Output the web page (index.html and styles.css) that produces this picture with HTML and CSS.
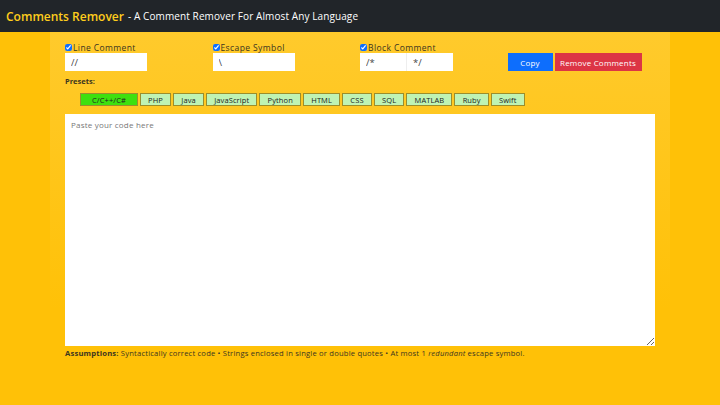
FILE: index.html
```html
<!DOCTYPE html>
<html>
  <head>
    <title>Comments Remover</title>
    <link rel="stylesheet" href="styles.css">
  </head>
  <body>
    <header class="topbar">
      <span class="brand">Comments Remover</span>
      <span class="tagline">- A Comment Remover For Almost Any Language</span>
    </header>
    <main class="container">
      <div class="options">
        <div class="option">
          <label class="option-label"><input type="checkbox" checked />Line Comment</label>
          <div class="fields">
            <input type="text" class="field field-wide" value="//" />
          </div>
        </div>
        <div class="option">
          <label class="option-label"><input type="checkbox" checked />Escape Symbol</label>
          <div class="fields">
            <input type="text" class="field field-wide" value="\" />
          </div>
        </div>
        <div class="option">
          <label class="option-label"><input type="checkbox" checked />Block Comment</label>
          <div class="fields">
            <input type="text" class="field field-half" value="/*" />
            <input type="text" class="field field-half" value="*/" />
          </div>
        </div>
        <div class="actions">
          <button class="btn btn-copy">Copy</button>
          <button class="btn btn-remove">Remove Comments</button>
        </div>
      </div>
      <div class="presets-label">Presets:</div>
      <div class="presets">
        <button class="preset active">C/C++/C#</button>
        <button class="preset">PHP</button>
        <button class="preset">Java</button>
        <button class="preset">JavaScript</button>
        <button class="preset">Python</button>
        <button class="preset">HTML</button>
        <button class="preset">CSS</button>
        <button class="preset">SQL</button>
        <button class="preset">MATLAB</button>
        <button class="preset">Ruby</button>
        <button class="preset">Swift</button>
      </div>
      <textarea class="code" placeholder="Paste your code here"></textarea>
      <p class="assumptions">
        <b>Assumptions:</b> Syntactically correct code &bull; Strings enclosed in single or double quotes &bull; At most 1 <i>redundant</i> escape symbol.
      </p>
    </main>
  </body>
</html>
```

FILE: styles.css
```css
body {
  font-family: "Open Sans", sans-serif;
  background-color: #ffc107;
  margin: 0;
  padding: 0;
  color: #3b3520;
}
.topbar {
  height: 32px;
  background-color: #212529;
  display: flex;
  align-items: center;
  padding-left: 6px;
  white-space: nowrap;
}
.brand {
  color: #ffcd1c;
  font-size: 12px;
  font-weight: 600;
}
.tagline {
  color: #fff;
  font-size: 10px;
  margin-left: 4px;
  letter-spacing: 0.1px;
}
.container {
  width: 590px;
  margin: 0 50px;
  padding: 9px 15px 20px;
  background: linear-gradient(to bottom, #ffca2c, #ffc107 80%);
}
.options {
  display: grid;
  grid-template-columns: repeat(4, 1fr);
}
.option-label {
  display: flex;
  align-items: center;
  font-size: 8.5px;
  letter-spacing: 0.4px;
  height: 10px;
  margin-top: 1px;
}
.option-label input {
  width: 7px;
  height: 7px;
  margin: 0 1px 0 0;
  accent-color: #0d6efd;
}
.fields {
  display: flex;
  margin-top: 1px;
}
.field {
  height: 18px;
  box-sizing: border-box;
  border: none;
  padding: 0 6px;
  font-family: "Open Sans", sans-serif;
  font-size: 9.5px;
  color: #444;
  background-color: #fff;
}
.field-wide {
  width: 82px;
}
.field-half {
  width: 46px;
}
.field-half + .field-half {
  width: 47px;
  border-left: 1px solid #eee;
}
.actions {
  display: flex;
  gap: 2px;
  align-items: flex-end;
  padding-top: 12px;
}
.btn {
  height: 18px;
  border: none;
  color: #fff;
  font-family: "Open Sans", sans-serif;
  font-size: 8px;
  letter-spacing: 0.2px;
  padding: 0;
  cursor: pointer;
}
.btn-copy {
  width: 45px;
  background-color: #0d6efd;
}
.btn-remove {
  width: 87px;
  background-color: #dc3545;
}
.presets-label {
  font-size: 7.5px;
  font-weight: 700;
  margin-top: 5px;
}
.presets {
  display: flex;
  gap: 2px;
  padding-left: 15px;
  margin-top: 7px;
}
.preset {
  height: 13px;
  box-sizing: border-box;
  padding: 0 7.2px;
  font-family: "Open Sans", sans-serif;
  font-size: 7.5px;
  letter-spacing: 0.1px;
  color: #222;
  background-color: #bff3b4;
  border: 1px solid #9b8e2c;
  border-radius: 0;
}
.preset.active {
  background-color: #3ee00f;
  padding: 0 11px;
}
.code {
  display: block;
  width: 590px;
  height: 232px;
  box-sizing: border-box;
  margin-top: 8px;
  border: none;
  padding: 5px 6px;
  font-family: "Open Sans", sans-serif;
  font-size: 8px;
  letter-spacing: 0.2px;
  background-color: #fff;
}
.code::placeholder {
  color: #777;
}
.assumptions {
  font-size: 7.6px;
  letter-spacing: 0.2px;
  margin: 2px 0 0;
}
```
